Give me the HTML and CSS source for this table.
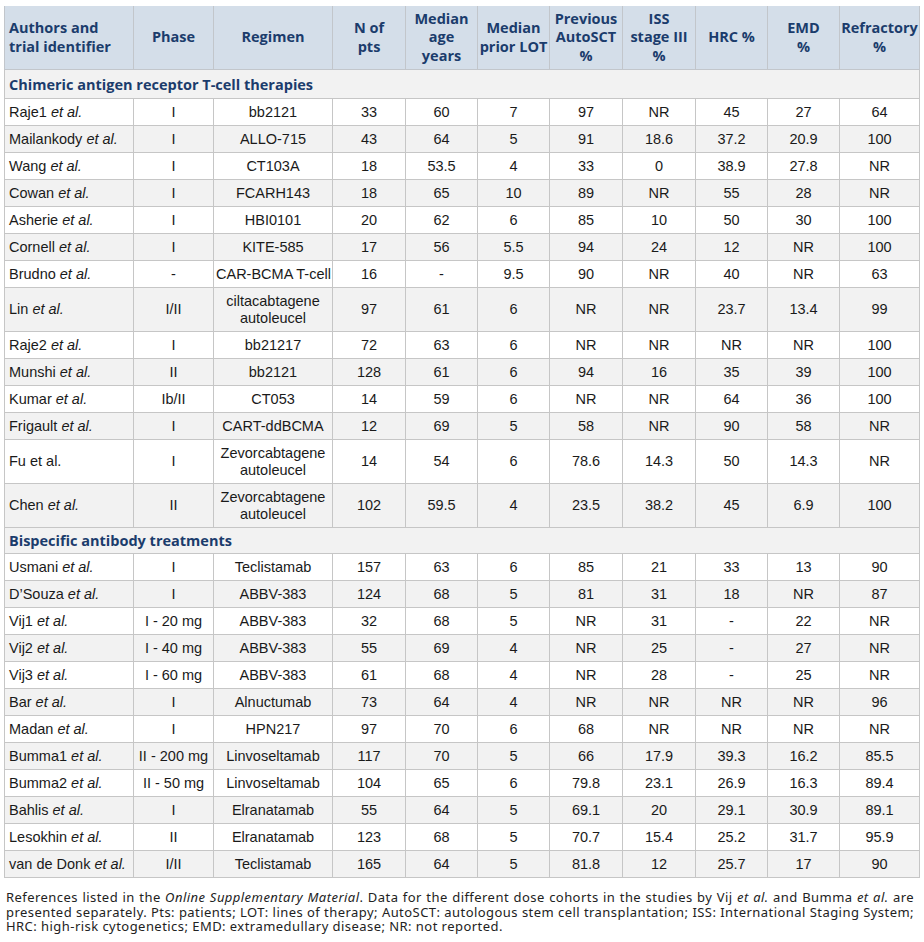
FILE: index.html
```html
<!DOCTYPE html>
<html lang="en">
<head>
<meta charset="utf-8">
<title>Table</title>
<link rel="stylesheet" href="styles.css">
</head>
<body>
<div class="page">
<table class="data">
<colgroup>
<col class="c1"><col class="c2"><col class="c3"><col class="c4"><col class="c5"><col class="c6"><col class="c7"><col class="c8"><col class="c9"><col class="c10"><col class="c11">
</colgroup>
<thead>
<tr>
<th class="first">Authors and<br>trial identifier</th>
<th>Phase</th>
<th>Regimen</th>
<th>N of<br>pts</th>
<th>Median<br>age<br>years</th>
<th>Median<br>prior LOT</th>
<th>Previous<br>AutoSCT<br>%</th>
<th>ISS<br>stage III<br>%</th>
<th>HRC %</th>
<th>EMD<br>%</th>
<th>Refractory<br>%</th>
</tr>
</thead>
<tbody>
<tr class="section s1"><td colspan="11">Chimeric antigen receptor T-cell therapies</td></tr>
<tr><td>Raje1 <i>et al.</i></td><td>I</td><td>bb2121</td><td>33</td><td>60</td><td>7</td><td>97</td><td>NR</td><td>45</td><td>27</td><td>64</td></tr>
<tr><td>Mailankody <i>et al.</i></td><td>I</td><td>ALLO-715</td><td>43</td><td>64</td><td>5</td><td>91</td><td>18.6</td><td>37.2</td><td>20.9</td><td>100</td></tr>
<tr><td>Wang <i>et al.</i></td><td>I</td><td>CT103A</td><td>18</td><td>53.5</td><td>4</td><td>33</td><td>0</td><td>38.9</td><td>27.8</td><td>NR</td></tr>
<tr><td>Cowan <i>et al.</i></td><td>I</td><td>FCARH143</td><td>18</td><td>65</td><td>10</td><td>89</td><td>NR</td><td>55</td><td>28</td><td>NR</td></tr>
<tr><td>Asherie <i>et al.</i></td><td>I</td><td>HBI0101</td><td>20</td><td>62</td><td>6</td><td>85</td><td>10</td><td>50</td><td>30</td><td>100</td></tr>
<tr><td>Cornell <i>et al.</i></td><td>I</td><td>KITE-585</td><td>17</td><td>56</td><td>5.5</td><td>94</td><td>24</td><td>12</td><td>NR</td><td>100</td></tr>
<tr><td>Brudno <i>et al.</i></td><td>-</td><td>CAR-BCMA T-cell</td><td>16</td><td>-</td><td>9.5</td><td>90</td><td>NR</td><td>40</td><td>NR</td><td>63</td></tr>
<tr class="tall"><td>Lin <i>et al.</i></td><td>I/II</td><td>ciltacabtagene<br>autoleucel</td><td>97</td><td>61</td><td>6</td><td>NR</td><td>NR</td><td>23.7</td><td>13.4</td><td>99</td></tr>
<tr><td>Raje2 <i>et al.</i></td><td>I</td><td>bb21217</td><td>72</td><td>63</td><td>6</td><td>NR</td><td>NR</td><td>NR</td><td>NR</td><td>100</td></tr>
<tr><td>Munshi <i>et al.</i></td><td>II</td><td>bb2121</td><td>128</td><td>61</td><td>6</td><td>94</td><td>16</td><td>35</td><td>39</td><td>100</td></tr>
<tr><td>Kumar <i>et al.</i></td><td>Ib/II</td><td>CT053</td><td>14</td><td>59</td><td>6</td><td>NR</td><td>NR</td><td>64</td><td>36</td><td>100</td></tr>
<tr><td>Frigault <i>et al.</i></td><td>I</td><td>CART-ddBCMA</td><td>12</td><td>69</td><td>5</td><td>58</td><td>NR</td><td>90</td><td>58</td><td>NR</td></tr>
<tr class="tall"><td>Fu et al.</td><td>I</td><td>Zevorcabtagene<br>autoleucel</td><td>14</td><td>54</td><td>6</td><td>78.6</td><td>14.3</td><td>50</td><td>14.3</td><td>NR</td></tr>
<tr class="tall"><td>Chen <i>et al.</i></td><td>II</td><td>Zevorcabtagene<br>autoleucel</td><td>102</td><td>59.5</td><td>4</td><td>23.5</td><td>38.2</td><td>45</td><td>6.9</td><td>100</td></tr>
</tbody>
<tbody>
<tr class="section"><td colspan="11">Bispecific antibody treatments</td></tr>
<tr><td>Usmani <i>et al.</i></td><td>I</td><td>Teclistamab</td><td>157</td><td>63</td><td>6</td><td>85</td><td>21</td><td>33</td><td>13</td><td>90</td></tr>
<tr><td>D’Souza <i>et al.</i></td><td>I</td><td>ABBV-383</td><td>124</td><td>68</td><td>5</td><td>81</td><td>31</td><td>18</td><td>NR</td><td>87</td></tr>
<tr><td>Vij1 <i>et al.</i></td><td>I - 20 mg</td><td>ABBV-383</td><td>32</td><td>68</td><td>5</td><td>NR</td><td>31</td><td>-</td><td>22</td><td>NR</td></tr>
<tr><td>Vij2 <i>et al.</i></td><td>I - 40 mg</td><td>ABBV-383</td><td>55</td><td>69</td><td>4</td><td>NR</td><td>25</td><td>-</td><td>27</td><td>NR</td></tr>
<tr><td>Vij3 <i>et al.</i></td><td>I - 60 mg</td><td>ABBV-383</td><td>61</td><td>68</td><td>4</td><td>NR</td><td>28</td><td>-</td><td>25</td><td>NR</td></tr>
<tr><td>Bar <i>et al.</i></td><td>I</td><td>Alnuctumab</td><td>73</td><td>64</td><td>4</td><td>NR</td><td>NR</td><td>NR</td><td>NR</td><td>96</td></tr>
<tr><td>Madan <i>et al.</i></td><td>I</td><td>HPN217</td><td>97</td><td>70</td><td>6</td><td>68</td><td>NR</td><td>NR</td><td>NR</td><td>NR</td></tr>
<tr><td>Bumma1 <i>et al.</i></td><td>II - 200 mg</td><td>Linvoseltamab</td><td>117</td><td>70</td><td>5</td><td>66</td><td>17.9</td><td>39.3</td><td>16.2</td><td>85.5</td></tr>
<tr><td>Bumma2 <i>et al.</i></td><td>II - 50 mg</td><td>Linvoseltamab</td><td>104</td><td>65</td><td>6</td><td>79.8</td><td>23.1</td><td>26.9</td><td>16.3</td><td>89.4</td></tr>
<tr><td>Bahlis <i>et al.</i></td><td>I</td><td>Elranatamab</td><td>55</td><td>64</td><td>5</td><td>69.1</td><td>20</td><td>29.1</td><td>30.9</td><td>89.1</td></tr>
<tr><td>Lesokhin <i>et al.</i></td><td>II</td><td>Elranatamab</td><td>123</td><td>68</td><td>5</td><td>70.7</td><td>15.4</td><td>25.2</td><td>31.7</td><td>95.9</td></tr>
<tr><td>van de Donk <i>et al.</i></td><td>I/II</td><td>Teclistamab</td><td>165</td><td>64</td><td>5</td><td>81.8</td><td>12</td><td>25.7</td><td>17</td><td>90</td></tr>
</tbody>
</table>
<p class="note">
<span class="line">References listed in the <i>Online Supplementary Material</i>. Data for the different dose cohorts in the studies by Vij <i>et al.</i> and Bumma <i>et al.</i> are</span>
<span class="line">presented separately. Pts: patients; LOT: lines of therapy; AutoSCT: autologous stem cell transplantation; ISS: International Staging System;</span>
<span class="line last">HRC: high-risk cytogenetics; EMD: extramedullary disease; NR: not reported.</span>
</p>
</div>
</body>
</html>
```

FILE: styles.css
```css
html, body {
  margin: 0;
  padding: 0;
  background: #ffffff;
}

.page {
  padding: 6px 5px 0 4px;
}

.data {
  width: 915px;
  table-layout: fixed;
  border-collapse: collapse;
  font-family: "Liberation Sans", Arial, sans-serif;
  font-size: 14.5px;
  color: #1a1a1a;
}

.c1 { width: 129px; }
.c2 { width: 80px; }
.c3 { width: 119px; }
.c4 { width: 73px; }
.c5 { width: 72px; }
.c6 { width: 72px; }
.c7 { width: 73px; }
.c8 { width: 73px; }
.c9 { width: 72px; }
.c10 { width: 72px; }
.c11 { width: 80px; }

.data th {
  background: #d4dee9;
  color: #1b3c6c;
  font-family: "Open Sans", "Noto Sans", sans-serif;
  font-weight: 700;
  font-size: 14.5px;
  line-height: 18.5px;
  text-align: center;
  vertical-align: middle;
  height: 63px;
  padding: 0 1px;
  border: 1px solid #c2c6cb;
  border-top: none;
}

.data th.first {
  text-align: left;
  padding-left: 4px;
}

.data td {
  height: 26px;
  padding: 0 2px;
  line-height: 17px;
  text-align: center;
  vertical-align: middle;
  border: 1px solid #c6c6c6;
  background: #ffffff;
  white-space: nowrap;
}

.data td:first-child {
  text-align: left;
  padding-left: 4px;
}

.data tbody tr:nth-child(odd) td {
  background: #f2f2f2;
}

.data tr.tall td {
  height: 43px;
}

.data tr.section td {
  background: #d4dee9;
  color: #1b3c6c;
  font-family: "Open Sans", "Noto Sans", sans-serif;
  font-weight: 700;
  font-size: 14.5px;
  text-align: left;
  height: 25px;
  padding-left: 4px;
}

.data tr.section.s1 td {
  height: 28px;
}

.note {
  margin: 12px 5px 0 2px;
  font-family: "Noto Sans", "Open Sans", sans-serif;
  font-size: 13px;
  letter-spacing: 0.45px;
  line-height: 14.5px;
  color: #222222;
}

.line {
  display: block;
  white-space: nowrap;
  text-align: justify;
  text-align-last: justify;
}

.line.last {
  text-align-last: left;
}
```
